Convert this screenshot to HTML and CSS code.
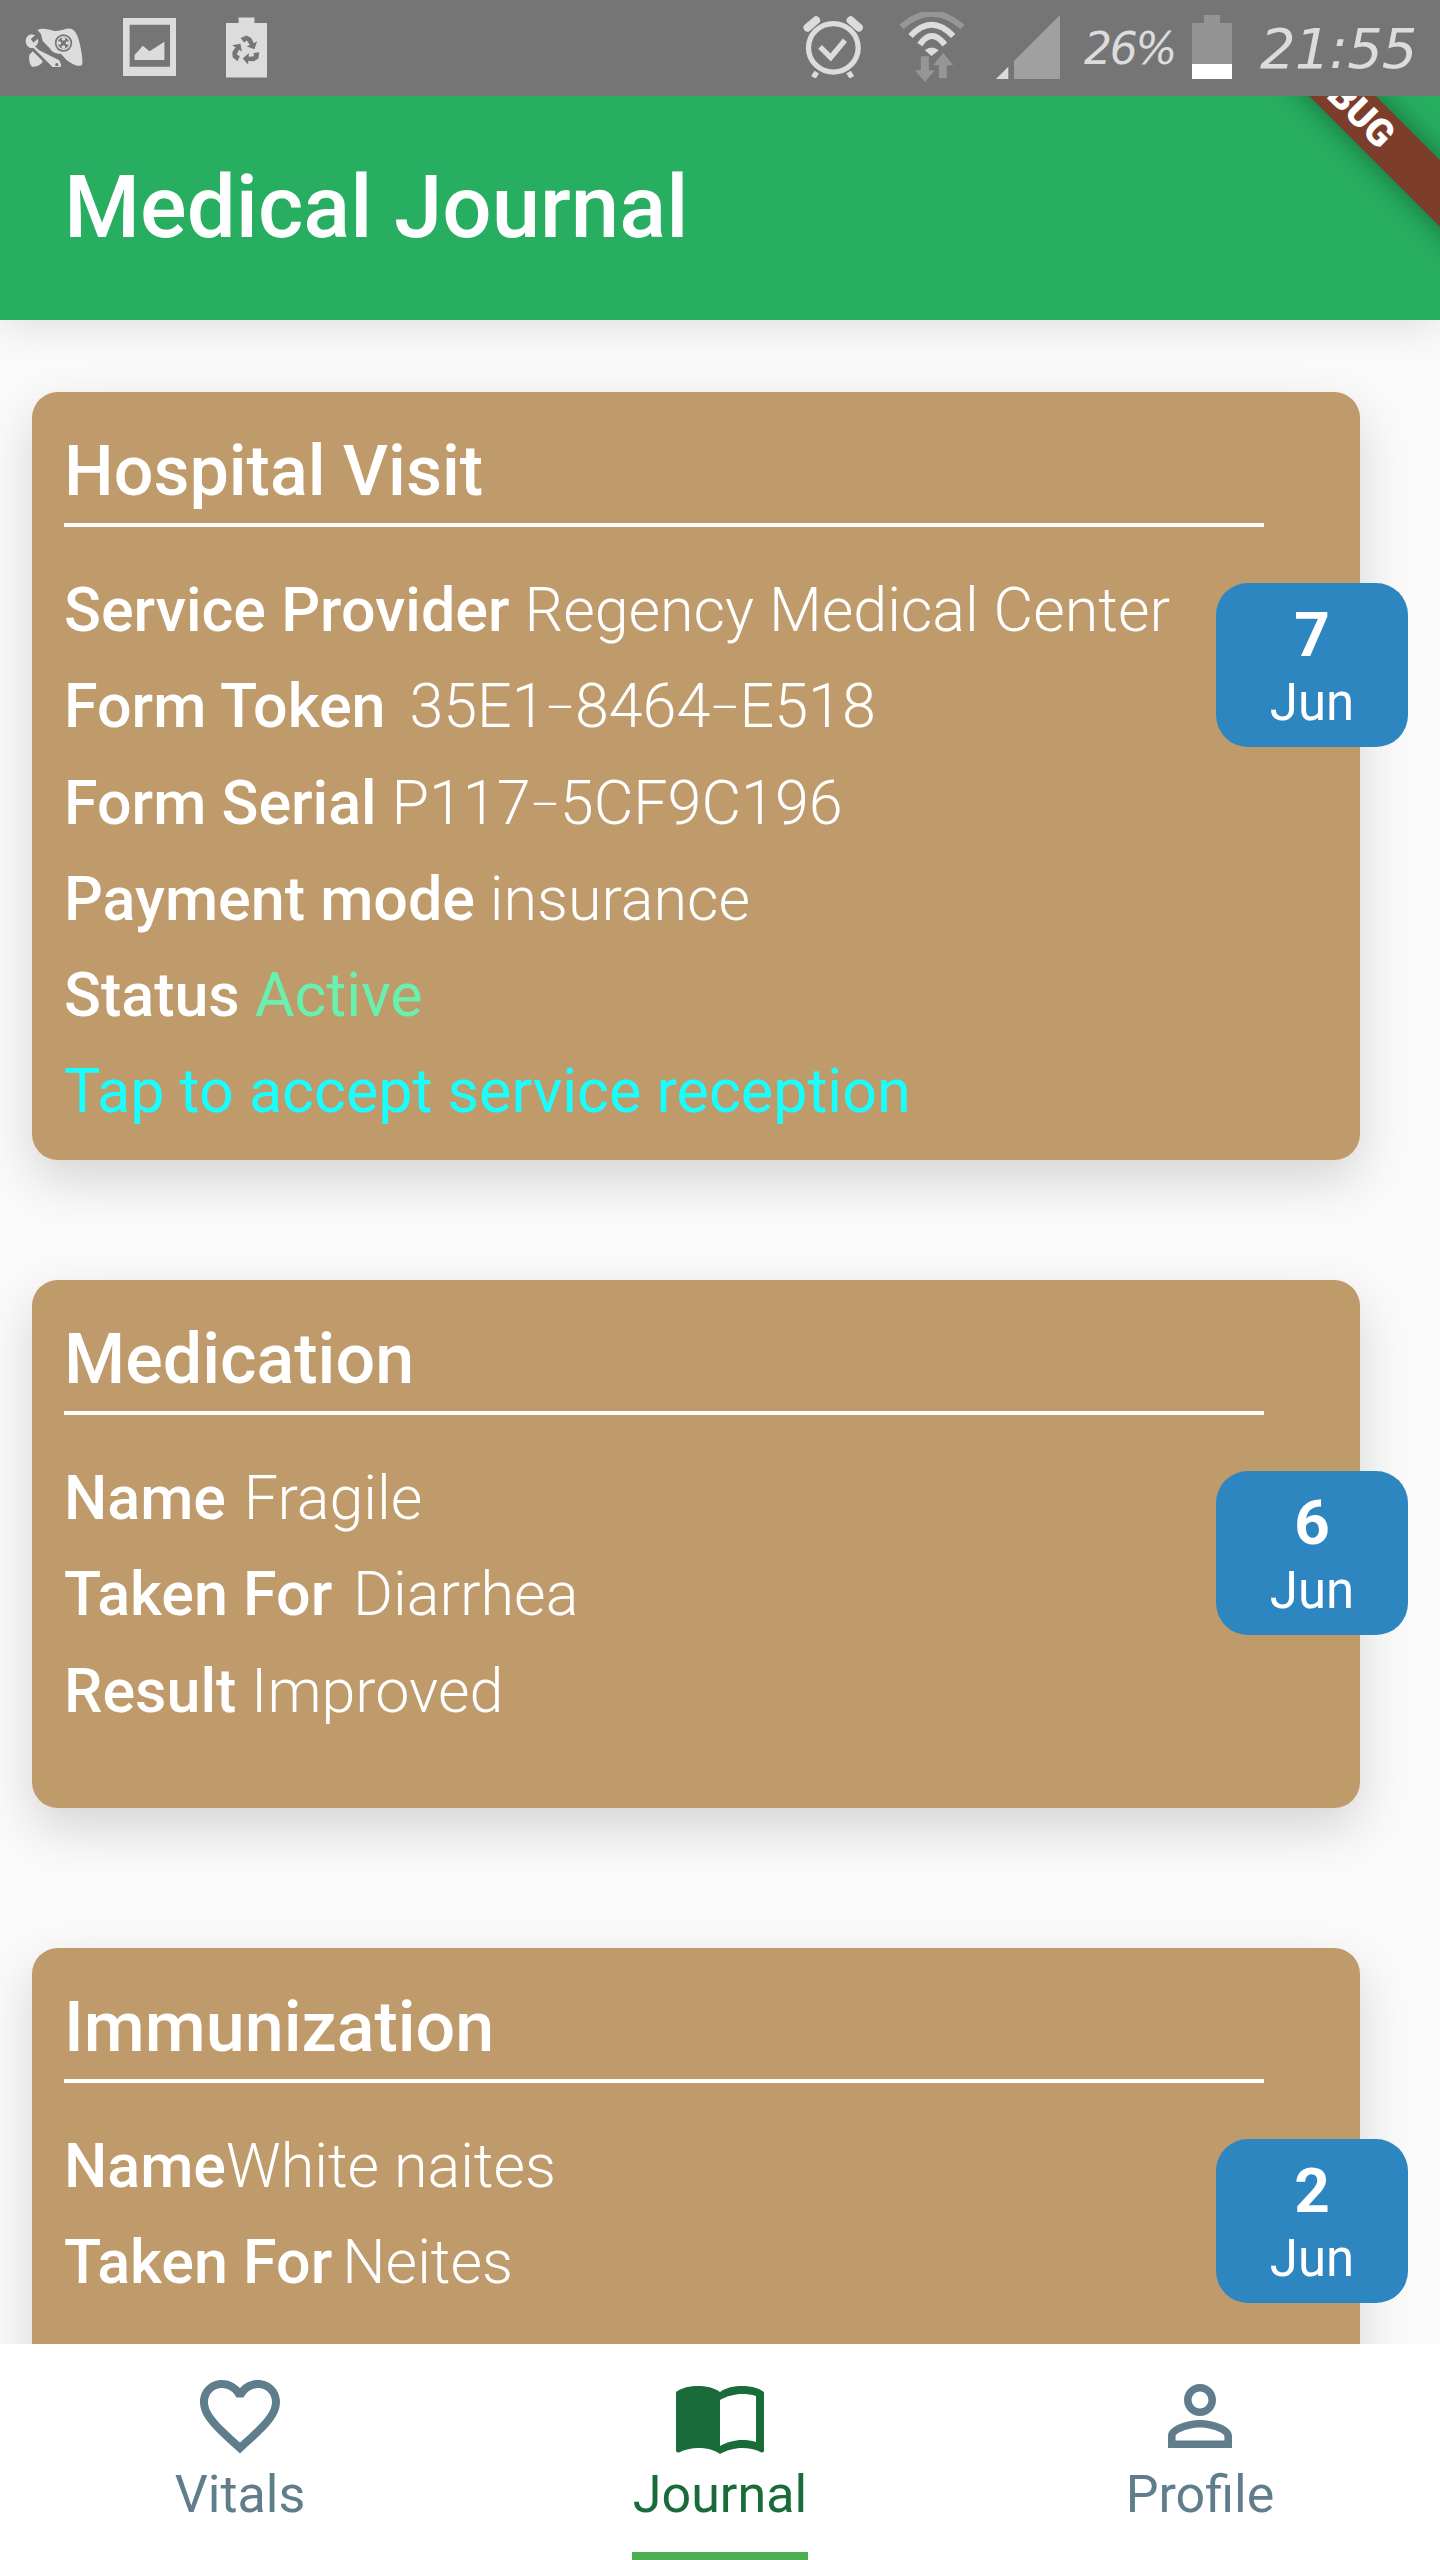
FILE: index.html
```html
<!DOCTYPE html>
<html lang="en">
<head>
<meta charset="utf-8">
<title>Medical Journal</title>
<link rel="stylesheet" href="styles.css">
</head>
<body>
<div class="phone">
  <div class="statusbar">
    <svg class="si game" viewBox="45 68 173 117"><path class="lt" d="M82 75C95 66 115 72 130 76 150 80 165 68 182 70 200 75 206 100 212 130 216 150 218 170 216 178 205 186 190 180 170 165L152 145C140 147 125 140 118 128L98 108 92 85Z"/><circle cx="160" cy="113" r="26" class="bg"/><circle cx="160" cy="113" r="21" class="lt"/><circle cx="160" cy="113" r="17" class="bg"/><circle cx="160" cy="101" r="5.500" class="lt"/><circle cx="160" cy="125" r="5.500" class="lt"/><circle cx="148" cy="113" r="5.500" class="lt"/><circle cx="172" cy="113" r="5.500" class="lt"/><path class="lt" d="M47 112C45 100 52 90 62 87L75 89 62 101 70 112 83 100C86 110 82 120 74 123L87 135 147 165 153 178C152 188 140 195 130 188L70 128C58 130 49 122 47 112Z"/><path class="lt" d="M58 148 68 138 98 168C94 178 80 186 66 184 58 180 55 160 58 148Z"/><circle cx="140" cy="178" r="5" class="bg"/></svg>
    <svg class="si pic" viewBox="0 0 160 175"><path class="lt" fill-rule="evenodd" d="M0 0h160v175H0zM20 20v127h122V20z"/><path class="lt" d="M35 127V112L60 84 80 100 125 72V127z"/></svg>
    <svg class="si recycle" viewBox="0 0 124 182"><path class="lt" d="M38 0h48v17h38v165H0V17h38z"/><g class="bg"><path d="M44 62 62 55 76 62 84 78 94 72 86 96 63 88 72 83 63 70 55 76Z"/><path d="M44 62 62 55 76 62 84 78 94 72 86 96 63 88 72 83 63 70 55 76Z" transform="rotate(120 60 100)"/><path d="M44 62 62 55 76 62 84 78 94 72 86 96 63 88 72 83 63 70 55 76Z" transform="rotate(240 60 100)"/></g></svg>
    <span class="spring"></span>
    <svg class="si alarm" viewBox="40 33 178 187"><ellipse cx="130" cy="129" rx="75" ry="73" class="ln" stroke-width="16"/><path class="ln" stroke-width="24" stroke-linecap="round" d="M52 68 78 46M182 46 207 68"/><path class="ln" stroke-width="16" d="M90 126 122 158 165 106M80 202 70 218M176 202 186 218"/></svg>
    <svg class="si wifi" viewBox="328 20 197 210"><path fill="none" stroke="#969696" stroke-width="18" d="M335 65Q425-15 518 65"/><path class="ln" stroke-width="18" d="M362 92Q425 24 490 92M390 118Q425 66 465 118"/><path class="lt" d="M405 135Q425 118 447 135L425 152Z"/><path class="dm" d="M393 153h24v42h18l-30 35-30-35h18zM447 218V180H430L460 142 490 180H471V218z"/></svg>
    <svg class="si signal" viewBox="618 30 192 192"><path class="lt" d="M618 222 655 185V222z"/><path fill="#a0a0a0" d="M672 222V168L810 30V222z"/></svg>
    <span class="pct">26%</span>
    <div class="batt"><span class="batt-cap"></span><span class="batt-body"><span class="batt-fill"></span></span></div>
    <span class="time">21:55</span>
  </div>

  <header class="appbar">
    <h1 class="apptitle">Medical Journal</h1>
    <div class="bannerclip"><div class="banner">DEBUG</div></div>
  </header>

  <main class="list">
    <article class="card card-visit">
      <h2 class="card-title">Hospital Visit</h2>
      <p class="row"><b>Service Provider</b> Regency Medical Center</p>
      <p class="row"><b class="gap-l">Form Token</b> 35E1<span class="dash">–</span>8464<span class="dash">–</span>E518</p>
      <p class="row"><b>Form Serial</b> P117<span class="dash">–</span>5CF9C196</p>
      <p class="row"><b>Payment mode</b> insurance</p>
      <p class="row"><b>Status</b> <span class="active">Active</span></p>
      <p class="row tap">Tap to accept service reception</p>
      <div class="date"><strong>7</strong><span>Jun</span></div>
    </article>

    <article class="card card-med">
      <h2 class="card-title">Medication</h2>
      <p class="row"><b class="gap-s">Name</b> Fragile</p>
      <p class="row"><b class="gap-m">Taken For</b> Diarrhea</p>
      <p class="row"><b>Result</b> Improved</p>
      <div class="date"><strong>6</strong><span>Jun</span></div>
    </article>

    <article class="card card-imm">
      <h2 class="card-title">Immunization</h2>
      <p class="row"><b>Name</b>White naites</p>
      <p class="row"><b class="gap-t">Taken For</b>Neites</p>
      <div class="date"><strong>2</strong><span>Jun</span></div>
    </article>
  </main>

  <nav class="nav">
    <div class="tab">
      <svg class="tabicon" viewBox="0 0 24 24"><path d="M16.5 3c-1.74 0-3.41.81-4.5 2.09C10.91 3.81 9.24 3 7.5 3 4.42 3 2 5.42 2 8.5c0 3.78 3.4 6.86 8.55 11.54L12 21.35l1.45-1.32C18.6 15.36 22 12.28 22 8.5 22 5.42 19.58 3 16.5 3zm-4.4 15.55l-.1.1-.1-.1C7.14 14.24 4 11.39 4 8.5 4 6.5 5.5 5 7.500 5c1.54 0 3.04.99 3.57 2.36h1.87C13.46 5.99 14.96 5 16.5 5c2 0 3.5 1.5 3.5 3.5 0 2.89-3.14 5.74-7.9 10.05z"/></svg>
      <span>Vitals</span>
    </div>
    <div class="tab tab-on">
      <svg class="tabicon" viewBox="0 0 24 24"><path d="M21 5c-1.11-.35-2.33-.5-3.5-.5-1.95 0-4.05.4-5.5 1.5-1.45-1.1-3.55-1.5-5.5-1.5S2.45 4.9 1 6v14.65c0 .25.25.5.5.5.1 0 .15-.05.25-.05C3.1 20.45 5.05 20 6.500 20c1.95 0 4.05.4 5.5 1.5 1.35-.85 3.8-1.5 5.5-1.5 1.65 0 3.35.3 4.75 1.05.1.05.15.05.25.05.25 0 .5-.25.5-.5V6c-.6-.45-1.25-.75-2-1zm0 13.5c-1.1-.35-2.3-.5-3.5-.5-1.7 0-4.15.65-5.5 1.5V8c1.35-.85 3.8-1.5 5.5-1.5 1.2 0 2.4.15 3.5.5v11.5z"/></svg>
      <span>Journal</span>
      <i class="indicator"></i>
    </div>
    <div class="tab">
      <svg class="tabicon" viewBox="0 0 24 24"><path d="M12 5.900c1.160 0 2.100.94 2.100 2.100s-.94 2.100-2.100 2.100S9.900 9.160 9.900 8s.94-2.100 2.100-2.100m0 9c2.970 0 6.100 1.460 6.100 2.100v1.100H5.900V17c0-.64 3.130-2.100 6.100-2.100M12 4C9.790 4 8 5.790 8 8s1.790 4 4 4 4-1.790 4-4-1.790-4-4-4zm0 9c-2.670 0-8 1.340-8 4v3h16v-3c0-2.660-5.330-4-8-4z"/></svg>
      <span>Profile</span>
    </div>
  </nav>
</div>
</body>
</html>
```

FILE: styles.css
```css
* { box-sizing: border-box; }
html, body { margin: 0; padding: 0; }
body { font-family: Roboto, "Liberation Sans", sans-serif; background: #fafafa; }
.phone { width: 1440px; height: 2560px; display: flex; flex-direction: column; overflow: hidden; }

.statusbar { height: 96px; flex: none; background: #757575; display: flex; align-items: center; padding-left: 25px; position: relative; z-index: 3; }
.si { display: block; flex: none; }
.lt { fill: #dcdcdc; }
.bg { fill: #757575; }
.dm { fill: #969696; }
.ln { fill: none; stroke: #dcdcdc; }
.game { width: 58px; height: 39px; margin-top: -1px; }
.pic { width: 53px; height: 58px; margin-left: 40px; margin-top: -2px; }
.recycle { width: 41px; height: 61px; margin-left: 50px; margin-top: -2px; }
.spring { flex: 1; }
.alarm { width: 60px; height: 62px; margin-top: -2px; }
.wifi { width: 66px; height: 70px; margin-left: 36px; margin-top: -2px; }
.signal { width: 64px; height: 64px; margin-left: 31px; margin-top: -2px; }
.pct { width: 96px; margin-left: 24px; font: italic 400 44px "DejaVu Sans", sans-serif; letter-spacing: -2.200px; color: #dcdcdc; white-space: nowrap; }
.batt { width: 40px; height: 64px; margin-left: 12px; margin-top: -2px; display: flex; flex-direction: column; align-items: center; }
.batt-cap { width: 16px; height: 8px; background: #949494; }
.batt-body { width: 40px; height: 56px; background: #949494; display: flex; align-items: flex-end; }
.batt-fill { width: 40px; height: 15px; background: #fff; }
.time { width: 157px; margin-left: 28px; margin-right: 23px; font: italic 400 56px "DejaVu Sans", sans-serif; letter-spacing: -1px; color: #dcdcdc; white-space: nowrap; }

.appbar { height: 224px; flex: none; background: #27ae60; position: relative; display: flex; align-items: center; padding: 0 0 2px 64px; box-shadow: 0 4px 40px rgba(0,0,0,.12); z-index: 2; }
.apptitle { margin: 0; color: #fff; font-size: 87px; font-weight: 500; line-height: 1; }
.bannerclip { position: absolute; inset: 0; overflow: hidden; }
.banner { position: absolute; left: 1145px; top: -21px; width: 400px; height: 47px; background: #7c3d2a; color: #fff; font: 900 38px/47px Roboto, sans-serif; text-align: center; transform: rotate(45deg); box-shadow: 0 0 28px rgba(0,0,0,.4); }

.list { flex: 1; min-height: 0; overflow: hidden; padding: 72px 32px 0; display: flex; flex-direction: column; }
.card { position: relative; width: 1328px; flex: none; background: #bf9a6b; border-radius: 26px; padding: 40px 32px 0 32px; box-shadow: 0 20px 50px rgba(0,0,0,.15); color: #fff; }
.card-visit { height: 768px; }
.card-med { height: 528px; margin-top: 120px; }
.card-imm { height: 528px; margin-top: 140px; }
.card-title { margin: 0 0 35px; width: 1200px; height: 95px; border-bottom: 4px solid #fff; font-size: 70px; font-weight: 500; line-height: 78px; }
.row { margin: 0; height: 96.300px; font-size: 61px; font-weight: 300; line-height: 96px; white-space: nowrap; }
.row b { font-weight: 500; }
.gap-s { margin-right: 3px; }
.gap-m { margin-right: 6px; }
.gap-l { margin-right: 9px; }
.gap-t { margin-right: 10px; }
.dash { font-size: 45px; vertical-align: 4px; line-height: 1; }
.active { color: #69f0ae; font-weight: 400; }
.tap { color: #18ffff; font-weight: 400; }

.date { position: absolute; left: 1184px; top: 191px; width: 192px; height: 164px; border-radius: 32px; background: #2e86c1; display: flex; flex-direction: column; align-items: center; padding-top: 15px; color: #fff; }
.date strong { font-size: 62px; font-weight: 700; line-height: 74px; }
.date span { font-size: 51px; font-weight: 400; line-height: 62px; }

.nav { height: 216px; flex: none; background: #fff; display: flex; position: relative; z-index: 2; }
.tab { flex: 1; display: flex; flex-direction: column; align-items: center; padding-top: 24px; color: #607d8b; position: relative; font-size: 52px; line-height: 64px; }
.tabicon { width: 96px; height: 96px; fill: currentColor; margin-bottom: -1px; }
.tab-on { color: #1a6b3a; }
.indicator { position: absolute; left: 152px; bottom: 0; width: 176px; height: 8px; background: #4caf50; }
```
